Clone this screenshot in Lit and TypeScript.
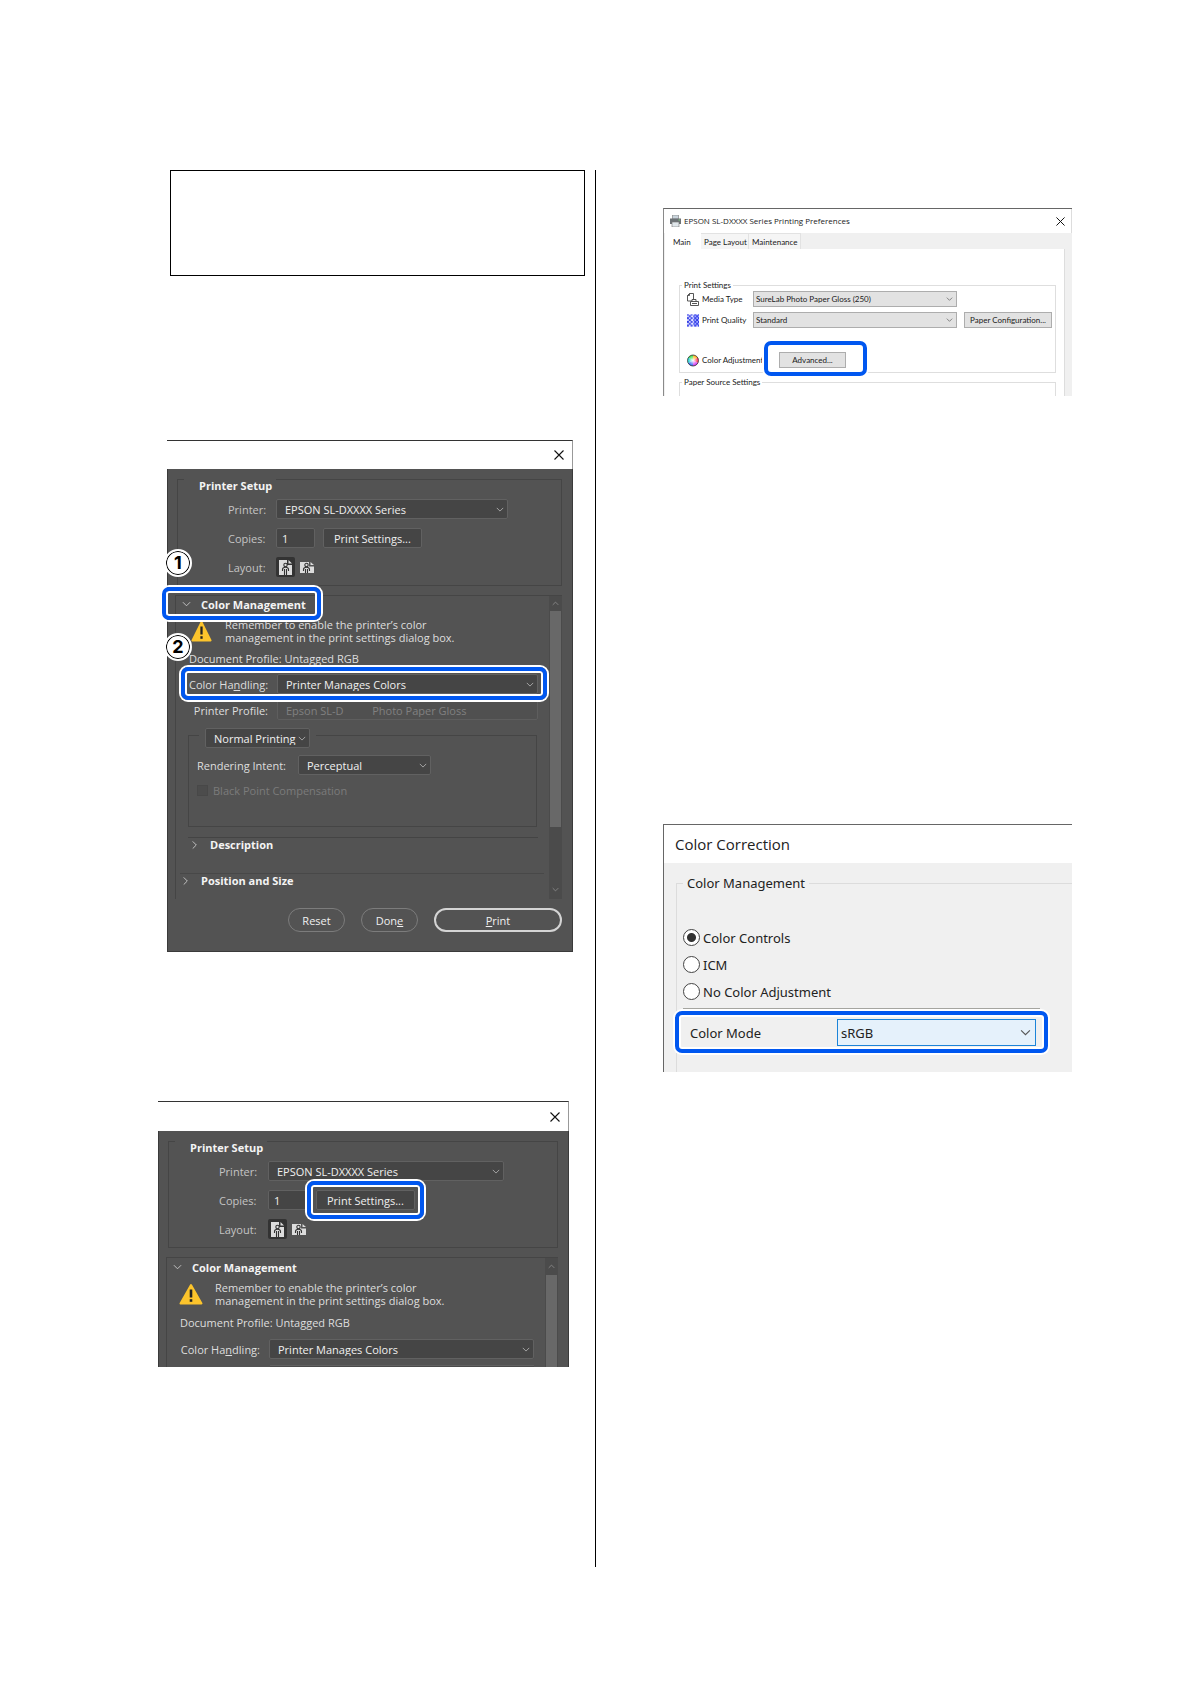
import { LitElement, html, css, svg, nothing } from "lit";
import { customElement, property } from "lit/decorators.js";

const chevron = (cls = "chev") => html`<svg class=${cls} viewBox="0 0 10 6" aria-hidden="true"><path d="M1 1l4 4 4-4" /></svg>`;

const closeIcon = html`<svg viewBox="0 0 10 10" aria-hidden="true"><path d="M0.5 0.5l9 9M9.5 0.5l-9 9" stroke="#111" stroke-width="1.1" fill="none" /></svg>`;

const base = css`
  :host { display: block; }
  *, *::before, *::after { box-sizing: border-box; }
  button, select, input { font: inherit; color: inherit; margin: 0; border-radius: 0; }
  h2, h3, p { margin: 0; font: inherit; }
  .pick { position: relative; display: grid; align-items: stretch; min-width: 0; }
  .pick select { appearance: none; width: 100%; min-width: 0; outline: none; opacity: 1; }
  .chev { fill: none; stroke: currentColor; pointer-events: none; }
  .pick .chev { position: absolute; top: 0; bottom: 0; margin: auto 0; right: 4px; width: 8px; height: 5px; }
  .close { display: block; padding: 0; border: 0; background: none; width: 10px; height: 10px; }
  .close svg { display: block; width: 100%; height: 100%; }
  .marked { position: relative; }
  .ring {
    position: absolute; z-index: 1; pointer-events: none;
    border: 4px solid #0057f0; border-radius: 7px;
    box-shadow: 0 0 0 2px #fff, inset 0 0 0 2px #fff;
  }
`;

@customElement("photo-print-dialog")
export class PhotoPrintDialog extends LitElement {
  @property({ type: Boolean, reflect: true }) brief = false;

  static styles = [base, css`
    :host {
      --gap: 8px; --warn: 21px; --warn-gap: 13px; --label: 79px; --lead: 0px; --name: 48px; --line: 8px;
      position: relative; color: #dedede;
      font: 11px/13px "Open Sans", "Noto Sans", sans-serif;
    }
    :host([brief]) { --gap: 9px; --warn: 24px; --warn-gap: 12px; --label: 80px; --lead: 1px; --name: 49px; --line: 9px; }
    .title {
      display: flex; align-items: center; justify-content: flex-end; height: 29px;
      padding-right: 8px; background: #fff; border-top: 1px solid #333; border-right: 1px solid #999;
    }
    :host([brief]) .title { height: 30px; }
    .body { background: #535353; border: 1px solid #3a3a3a; border-width: 0 1px 0 1px; padding: 10px 10px 0 7px; }
    .body.closed { border-bottom-width: 1px; padding-bottom: 19px; }
    .group { border: 1px solid #454545; margin-left: 2px; height: 107px; padding: 0 53px 0 0; }
    .group h2 {
      font-weight: 700; color: #f4f4f4; line-height: 14px; width: 92px;
      margin: -1px 0 6px 6px; padding-left: 15px; background: #535353; white-space: nowrap;
    }
    .rows { display: grid; gap: 9px; padding-left: 50px; }
    .row { display: grid; grid-template-columns: var(--name) minmax(0, 1fr); height: 20px; align-items: center; white-space: nowrap; }
    .line { display: flex; gap: var(--line); }
    .dim { color: #c4c4c4; }
    select, .field, .btn {
      height: 20px; background: #454545; border: 1px solid #616161; border-radius: 2px; color: #f0f0f0;
    }
    select { padding: 0 10px 0 8px; }
    .pick .chev { stroke: #bbb; }
    select:disabled { background: #505050; border-color: #5e5e5e; color: #808080; }
    .field { width: 39px; padding: 0 5px; }
    .btn { padding: 0 10px; }
    .btn-wrap { display: block; }
    .btn-wrap .ring { inset: -9px; }
    .icons { display: flex; align-items: center; gap: 5px; }
    .icon { display: grid; place-items: center; padding: 0; border: 0; background: none; height: 20px; }
    .icon.on { width: 19px; background: #333; border-radius: 2px; }
    .icon svg { display: block; }
    .panel {
      display: grid; grid-template-columns: minmax(0, 1fr) 13px; margin-top: 9px;
      border: 1px solid #454545; border-width: 1px 0 0 1px;
    }
    .main { padding-top: var(--lead); }
    .section { display: flex; align-items: center; height: 16px; font-weight: 700; color: #f4f4f4; }
    .section .chev { width: 9px; height: 6px; margin: 0 10px 0 6px; stroke: #ccc; }
    .section .right { transform: rotate(-90deg); }
    .toggle { display: flex; align-items: center; padding: 0; border: 0; background: none; font-weight: 700; white-space: nowrap; }
    .head .ring { inset: -9px auto -8px -14px; width: 159px; }
    .warning { display: flex; align-items: center; margin: 6px 0 var(--gap); padding-left: 15px; white-space: nowrap; }
    :host([brief]) .warning { padding-left: 12px; }
    .warning svg { width: var(--warn); height: 22px; margin-right: var(--warn-gap); flex: none; }
    .doc { padding-left: 13px; line-height: 14px; margin-bottom: var(--gap); }
    .handling { display: grid; grid-template-columns: var(--label) minmax(0, 1fr); column-gap: 9px; height: 20px; align-items: center; margin: 0 11px 6px 13px; }
    .handling label { text-align: right; white-space: nowrap; }
    .handling .ring { inset: -7px -9px -6px -8px; }
    .proof { margin: 15px 12px 10px 12px; border: 1px solid #454545; padding: 0 0 29px 8px; }
    .mode { width: max-content; margin: -8px 0 7px 2px; padding: 0 6px; background: #535353; }
    .mode .pick { width: 105px; }
    .intent { display: grid; grid-template-columns: 101px 133px; align-items: center; height: 20px; margin-bottom: 8px; }
    .check { display: flex; align-items: center; gap: 5px; height: 14px; color: #7b7b7b; }
    .check input { appearance: none; width: 11px; height: 11px; background: #4c4c4c; border: 1px solid #484848; }
    .sub { height: 36px; margin: 0 11px 0 12px; border-top: 1px solid #444; align-items: flex-start; }
    .sub .chev { margin: 0 11px 0 2px; }
    .last { height: 26px; margin: 0 5px 0 4px; border-top: 1px solid #484848; align-items: flex-start; }
    .last .chev { margin: 0 11px 0 1px; }
    .bar { display: grid; grid-template-rows: 15px minmax(0, 1fr) 72px; background: #4b4b4b; }
    :host([brief]) .bar { grid-template-rows: 17px minmax(0, 1fr); }
    .bar .chev { width: 7px; height: 5px; margin: auto; stroke: #999; }
    .bar .up { transform: rotate(180deg); }
    .bar .down { margin: auto auto 7px; }
    .thumb { background: #686868; margin: 0 1px; }
    .actions { display: flex; justify-content: flex-end; gap: 16px; margin-top: 9px; }
    .pill { width: 57px; height: 24px; padding: 0; border: 1px solid #7c7c7c; border-radius: 12px; background: none; color: #f0f0f0; }
    .pill.primary { width: 128px; border: 2px solid #d4d4d4; }
    .next { height: 2px; margin: 0 11px 0 103px; border-top: 1px solid #616161; background: #4a4a4a; }
    .step {
      position: absolute; z-index: 2; left: -3px; width: 28px; height: 28px; border: 2px solid #fff;
      border-radius: 50%; background: #fff; box-shadow: inset 0 0 0 1px #000; color: #000;
      font: 700 18px/24px Inter, sans-serif; text-align: center;
    }
    .step.one { top: 109px; }
    .step.two { top: 193px; }
  `];

  private person(x: number, y: number) {
    return svg`<g fill="none" stroke="#333" stroke-width="1.1"><circle cx=${x} cy=${y} r="1.7" /><path d="M${x - 3} ${y + 6}v-1.500q0-2.300 3-2.300t3 2.300v1.500M${x - 1} ${y + 4}v7M${x + 1} ${y + 4}v7" /></g>`;
  }

  render() {
    const b = this.brief;
    return html`
      <div class="title"><button class="close" aria-label="Close">${closeIcon}</button></div>
      <div class="body ${b ? "" : "closed"}">
        <div class="group" role="group" aria-labelledby="setup">
          <h2 id="setup">Printer Setup</h2>
          <div class="rows">
            <div class="row">
              <label class="dim" for="printer">Printer:</label>
              <span class="pick"><select id="printer"><option>EPSON SL-DXXXX Series</option></select>${chevron()}</span>
            </div>
            <div class="row">
              <label class="dim" for="copies">Copies:</label>
              <span class="line">
                <input class="field" id="copies" type="text" value="1" />
                <span class="btn-wrap marked"><button class="btn">Print Settings...</button>${b ? html`<span class="ring"></span>` : nothing}</span>
              </span>
            </div>
            <div class="row">
              <span class="dim">Layout:</span>
              <span class="icons">
                <button class="icon on" aria-label="Portrait"><svg width="13" height="15" viewBox="0 0 13 15"><path d="M0 0h8v5h5v10H0z" fill="#dcdcdc" /><path d="M9.500 0v3.500H13z" fill="#dcdcdc" />${this.person(6.5, 5)}</svg></button>
                <button class="icon" aria-label="Landscape"><svg width="14" height="11" viewBox="0 0 14 11"><path d="M0 0h9v4.500h5V11H0z" fill="#dcdcdc" /><path d="M10.500 0v3H14z" fill="#dcdcdc" />${this.person(6.5, 3)}</svg></button>
              </span>
            </div>
          </div>
        </div>
        <div class="panel">
          <div class="main">
            <h2 class="section head marked">
              <button class="toggle" aria-expanded="true">${chevron()}Color Management</button>
              ${b ? nothing : html`<span class="ring"></span>`}
            </h2>
            <div class="warning">
              <svg viewBox="0 0 24 22" preserveAspectRatio="none" aria-hidden="true"><path d="M12 2L22.500 20.500H1.500z" fill="#fcc42c" stroke="#fcc42c" stroke-width="2" stroke-linejoin="round" /><path d="M12 6.500v8" stroke="#222" stroke-width="2.600" /><path d="M12 16.200v2.600" stroke="#222" stroke-width="2.600" /></svg>
              <p>Remember to enable the printer’s color<br />management in the print settings dialog box.</p>
            </div>
            <p class="doc">Document Profile: Untagged RGB</p>
            <div class="handling marked">
              <label for="handling">Color Ha<u>n</u>dling:</label>
              <span class="pick"><select id="handling"><option>Printer Manages Colors</option></select>${chevron()}</span>
              ${b ? nothing : html`<span class="ring"></span>`}
            </div>
            ${b ? html`<div class="next"></div>` : this.details()}
          </div>
          <div class="bar" aria-hidden="true">${chevron("chev up")}<div class="thumb"></div>${b ? nothing : chevron("chev down")}</div>
        </div>
        ${b ? nothing : html`
          <div class="actions">
            <button class="pill">Reset</button>
            <button class="pill">Don<u>e</u></button>
            <button class="pill primary"><u>P</u>rint</button>
          </div>`}
      </div>
      ${b ? nothing : html`<span class="step one">1</span><span class="step two">2</span>`}
    `;
  }

  private details() {
    return html`
      <div class="handling">
        <label for="profile">Printer Profile:</label>
        <span class="pick"><select id="profile" disabled><option>Epson SL-D${"\u00a0".repeat(10)}Photo Paper Gloss</option></select></span>
      </div>
      <div class="proof">
        <div class="mode"><span class="pick"><select aria-label="Printing mode"><option>Normal Printing</option></select>${chevron()}</span></div>
        <div class="intent">
          <label for="intent">Rendering Intent:</label>
          <span class="pick"><select id="intent"><option>Perceptual</option></select>${chevron()}</span>
        </div>
        <label class="check"><input type="checkbox" disabled />Black Point Compensation</label>
      </div>
      <h2 class="section sub"><button class="toggle" aria-expanded="false">${chevron("chev right")}Description</button></h2>
      <h2 class="section last"><button class="toggle" aria-expanded="false">${chevron("chev right")}Position and Size</button></h2>
    `;
  }
}

@customElement("printing-preferences")
export class PrintingPreferences extends LitElement {
  static styles = [base, css`
    :host { color: #1a1a1a; font: 8px/10px Lato, "Noto Sans", sans-serif; border-top: 1px solid #666; border-left: 1px solid #8a8a8a; background: #f0f0f0; }
    .title { display: flex; align-items: center; gap: 3px; height: 24px; padding: 0 6px; background: #fff; border-right: 1px solid #ddd; font-family: "Open Sans", sans-serif; white-space: nowrap; }
    .title .printer { width: 11px; height: 12px; flex: none; }
    .title .close { margin-left: auto; width: 9px; height: 9px; }
    .content { padding: 0 7px 0 1px; }
    .tabs { display: flex; height: 16px; }
    .tab { border: 1px solid #e2e2e2; border-width: 1px 1px 0 0; background: #f5f5f5; padding: 0 3px; text-align: center; white-space: nowrap; }
    .tab.page { width: 48px; }
    .tab.care { width: 52px; }
    .tab.on { width: 36px; background: #fff; border-color: #fff; text-align: left; padding-left: 8px; }
    .pane { background: #fff; border-right: 1px solid #ddd; padding: 31px 8px 0 14px; }
    fieldset { min-width: 0; margin: 0 0 4px; padding: 1px 3px 4px 7px; border: 1px solid #dedede; }
    legend { padding: 0 2px; margin-left: -5px; line-height: 10px; }
    .last { height: 19px; margin: 0; border-bottom: 0; }
    .grid { display: grid; grid-template-columns: 15px 51px minmax(0, 1fr) 95px; row-gap: 5px; align-items: center; white-space: nowrap; }
    .grid > svg { width: 12px; height: 13px; }
    select, .btn { height: 16px; background: #e2e2e2; border: 1px solid #adadad; }
    select { padding: 0 12px 0 2px; }
    .pick .chev { width: 7px; height: 4px; stroke: #555; }
    .btn { padding: 0; }
    .wide { margin-left: 7px; }
    .adjust { margin-top: 24px; }
    .adv { width: 67px; margin-left: 26px; }
    .adv .btn { display: block; width: 100%; }
    .adv .ring { inset: -11px -21px -8px -15px; }
  `];

  render() {
    const cells = [0, 1, 2, 3, 4, 5, 6, 7, 8, 9, 10, 11, 12].flatMap((y) =>
      [0, 1, 2, 3, 4, 5, 7, 8, 9, 10, 11, 12].filter((x) => (x + y) % 4 === 0 || (x - y + 12) % 4 === 1).map((x) => svg`<rect x=${x} y=${y} width="1" height="1" />`));
    return html`
      <div class="title">
        <svg class="printer" viewBox="0 0 11 12" aria-hidden="true"><path d="M2.500 0h6v4h-6z" fill="#c9d4dc" stroke="#777" stroke-width=".6" /><path d="M0 3.500h11V9H0z" fill="#6c7276" /><path d="M2 7h7v5H2z" fill="#dfe6ea" stroke="#777" stroke-width=".6" /><path d="M8.500 5h1.500" stroke="#7fd07f" /></svg>
        <span>EPSON SL-DXXXX Series Printing Preferences</span>
        <button class="close" aria-label="Close">${closeIcon}</button>
      </div>
      <div class="content">
        <div class="tabs" role="tablist">
          <button class="tab on" role="tab" aria-selected="true">Main</button>
          <button class="tab page" role="tab">Page Layout</button>
          <button class="tab care" role="tab">Maintenance</button>
        </div>
        <div class="pane">
          <fieldset>
            <legend>Print Settings</legend>
            <div class="grid">
              <svg viewBox="0 0 12 13" aria-hidden="true" fill="#fff" stroke="#444" stroke-width=".9"><path d="M2.500.5h4v7.500h-6V2.500zM2.500.5v2h-2" /><path d="M5 6.500h4v3H5z" /><path d="M3.500 8.500h8v4h-8zM5 10.500h5" /></svg>
              <label for="media">Media Type</label>
              <span class="pick"><select id="media"><option>SureLab Photo Paper Gloss (250)</option></select>${chevron()}</span>
              <span></span>
              <svg viewBox="0 0 13 13" aria-hidden="true" fill="#1a26e0"><rect width="6" height="13" fill="#d4d6ff" /><rect x="7" width="6" height="13" fill="#9fa6ff" />${cells}</svg>
              <label for="quality">Print Quality</label>
              <span class="pick"><select id="quality"><option>Standard</option></select>${chevron()}</span>
              <button class="btn wide">Paper Configuration...</button>
            </div>
            <div class="grid adjust">
              <svg viewBox="0 0 12 12" aria-hidden="true">
                <defs><clipPath id="disc"><circle cx="6" cy="6" r="5.500" /></clipPath><radialGradient id="shine"><stop offset="0" stop-color="#fff" /><stop offset="1" stop-color="#fff" stop-opacity="0" /></radialGradient></defs>
                <g clip-path="url(#disc)"><path d="M6 6V-3L14 1z" fill="#ffb020" /><path d="M6 6L14 1v9z" fill="#ff3d5c" /><path d="M6 6l8 4-8 6z" fill="#d23cf0" /><path d="M6 6v10l-8-6z" fill="#3d6cf5" /><path d="M6 6l-8 4V1z" fill="#25d3d3" /><path d="M6 6L-2 1l8-4z" fill="#3fe04a" /><circle cx="6" cy="6" r="5" fill="url(#shine)" /></g>
                <circle cx="6" cy="6" r="5.500" fill="none" stroke="#333" stroke-width=".8" />
              </svg>
              <span>Color Adjustment</span>
              <span class="adv marked"><button class="btn">Advanced...</button><span class="ring"></span></span>
            </div>
          </fieldset>
          <fieldset class="last"><legend>Paper Source Settings</legend></fieldset>
        </div>
      </div>
    `;
  }
}

@customElement("color-correction")
export class ColorCorrection extends LitElement {
  static styles = [base, css`
    :host { color: #222; font: 13px/16px "Noto Sans", sans-serif; border-top: 1px solid #666; border-left: 1px solid #666; background: #f0f0f0; }
    .title { height: 38px; padding-left: 11px; background: #fff; font: 15px/38px "Open Sans", sans-serif; }
    .body { padding: 12px 0 0 12px; }
    fieldset { min-width: 0; margin: 0; padding: 33px 0 26px 6px; border: 1px solid #dcdcdc; border-width: 1px 0 0 1px; }
    legend { padding: 0 4px; line-height: 16px; }
    .opt { display: flex; align-items: center; gap: 3px; height: 27px; }
    .opt input { appearance: none; width: 17px; height: 17px; border: 1px solid #444; border-radius: 50%; background: #fff; }
    .opt input:checked { background: radial-gradient(circle, #333 0 4px, #fff 5px); }
    hr { height: 1px; margin: 3px 32px 10px 0; border: 0; background: #a5a5a0; }
    .mode { display: grid; grid-template-columns: 147px minmax(0, 1fr); align-items: center; margin: 0 36px 0 7px; }
    .mode .ring { inset: -8px -12px -7px -15px; }
    select { height: 27px; padding: 0 20px 0 3px; background: #e5f1fb; border: 1px solid #1c84d8; }
    .pick .chev { width: 11px; height: 7px; right: 5px; stroke: #555; }
  `];

  render() {
    return html`
      <h2 class="title">Color Correction</h2>
      <div class="body">
        <fieldset>
          <legend>Color Management</legend>
          ${["Color Controls", "ICM", "No Color Adjustment"].map((t, i) => html`<label class="opt"><input type="radio" name="method" ?checked=${i === 0} />${t}</label>`)}
          <hr />
          <div class="mode marked">
            <label for="mode">Color Mode</label>
            <span class="pick"><select id="mode"><option>sRGB</option></select>${chevron()}</span>
            <span class="ring"></span>
          </div>
        </fieldset>
      </div>
    `;
  }
}

@customElement("app-root")
export class AppRoot extends LitElement {
  static styles = css`
    :host { display: block; background: #fff; }
    .page { display: grid; grid-template-columns: 437fr 1px 476fr; padding: 170px 118px 114px 158px; }
    .rule { background: #000; }
    .left { padding-bottom: 200px; }
    .notice { height: 106px; margin: 0 10px 164px 12px; border: 1px solid #000; box-sizing: border-box; }
    .setup { margin: 0 22px 149px 9px; }
    .repeat { margin-right: 26px; }
    .right { padding: 38px 0 0 67px; }
    .prefs { margin-bottom: 428px; }
  `;

  render() {
    return html`
      <main class="page">
        <div class="left">
          <div class="notice"></div>
          <photo-print-dialog class="setup"></photo-print-dialog>
          <photo-print-dialog class="repeat" brief></photo-print-dialog>
        </div>
        <div class="rule"></div>
        <div class="right">
          <printing-preferences class="prefs"></printing-preferences>
          <color-correction></color-correction>
        </div>
      </main>
    `;
  }
}
